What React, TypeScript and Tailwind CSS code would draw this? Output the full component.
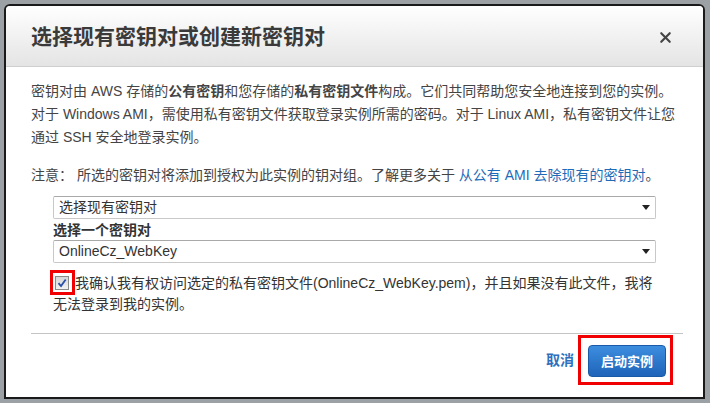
import { X } from "lucide-react";

const font = { fontFamily: '"Liberation Sans", Arial, "Noto Sans CJK SC", sans-serif' };

const SelectBox = ({ value }: { value: string }) => (
  <div className="h-[23px] flex items-center justify-between border border-[#c8c8c8] border-t-[#a9a9a9] rounded-[2px] pl-[5px] pr-[5px] text-[14px] text-[#333] bg-white">
    <span>{value}</span>
    <span className="w-0 h-0 border-l-[4px] border-r-[4px] border-t-[5px] border-l-transparent border-r-transparent border-t-[#222]" />
  </div>
);

export default function App() {
  return (
    <div className="w-[710px] h-[403px] bg-[#9ca1a6] pt-[4px] pl-[4px] pr-[5px] pb-[4px]" style={font}>
      <div className="h-[395px] bg-white border-2 border-[#1a1a1a] rounded-t-[6px] flex flex-col overflow-hidden">
        {/* 标题 */}
        <div className="h-[61px] shrink-0 flex items-center justify-between pl-[25px] pr-[29px] bg-gradient-to-b from-white to-[#e4e4e4] border-b border-[#cfcfcf]">
          <span className="text-[21px] font-bold text-[#3a3a3a] mt-[2px]">选择现有密钥对或创建新密钥对</span>
          <X className="w-[17px] h-[17px] text-[#444] mt-[3px]" strokeWidth={3} />
        </div>

        {/* 内容 */}
        <div className="flex-1 pl-[25px] pr-[22px] pt-[13px] text-[14px] text-[#444] leading-[23px]">
          <p>
            密钥对由 AWS 存储的<b>公有密钥</b>和您存储的<b>私有密钥文件</b>构成。它们共同帮助您安全地连接到您的实例。对于 Windows AMI，需使用私有密钥文件获取登录实例所需的密码。对于 Linux AMI，私有密钥文件让您通过 SSH 安全地登录实例。
          </p>
          <p className="mt-[15px]">
            注意： 所选的密钥对将添加到授权为此实例的钥对组。了解更多关于 <span className="text-[#1e6bb8]">从公有 AMI 去除现有的密钥对</span>。
          </p>

          <div className="ml-[22px] mr-[25px] mt-[9px]">
            <SelectBox value="选择现有密钥对" />
            <div className="font-bold text-[#333] mt-[1px] leading-[20px]">选择一个密钥对</div>
            <SelectBox value="OnlineCz_WebKey" />
            <div className="mt-[10px] leading-[21px] text-[#333]">
              <span className="relative inline-block align-[-2px] w-[14px] h-[14px] ml-[2px] mr-[6px] border border-[#8a8a8a] bg-gradient-to-b from-[#d6d6d6] to-[#f2f2f2]">
                <span className="absolute -left-[6px] -top-[7px] w-[25px] h-[25px] border-[3px] border-[#f00000]" />
                <svg viewBox="0 0 10 10" className="absolute left-[1px] top-[1px] w-[10px] h-[10px]">
                  <path d="M1.5 5.2 L4 8 L8.7 1.5" fill="none" stroke="#2a4fa8" strokeWidth="1.8" />
                </svg>
              </span>
              我确认我有权访问选定的私有密钥文件(OnlineCz_WebKey.pem)，并且如果没有此文件，我将无法登录到我的实例。
            </div>
          </div>

          <div className="h-px bg-[#c4c4c4] mt-[18px] -mr-[2px]" />

          <div className="flex items-center justify-end mt-[1px] mr-[8px]">
            <span className="text-[#2f6fbe] font-bold text-[14px] mr-[4px]">取消</span>
            <div className="border-[3px] border-[#f00000] pt-[7px] pb-[5px] pl-[7px] pr-[4px]">
              <button className="w-[78px] h-[32px] rounded-[4px] bg-gradient-to-b from-[#3d8ee0] to-[#1f64b8] border border-[#1b5aa6] text-white text-[13px] font-bold">
                启动实例
              </button>
            </div>
          </div>
        </div>
      </div>
    </div>
  );
}
